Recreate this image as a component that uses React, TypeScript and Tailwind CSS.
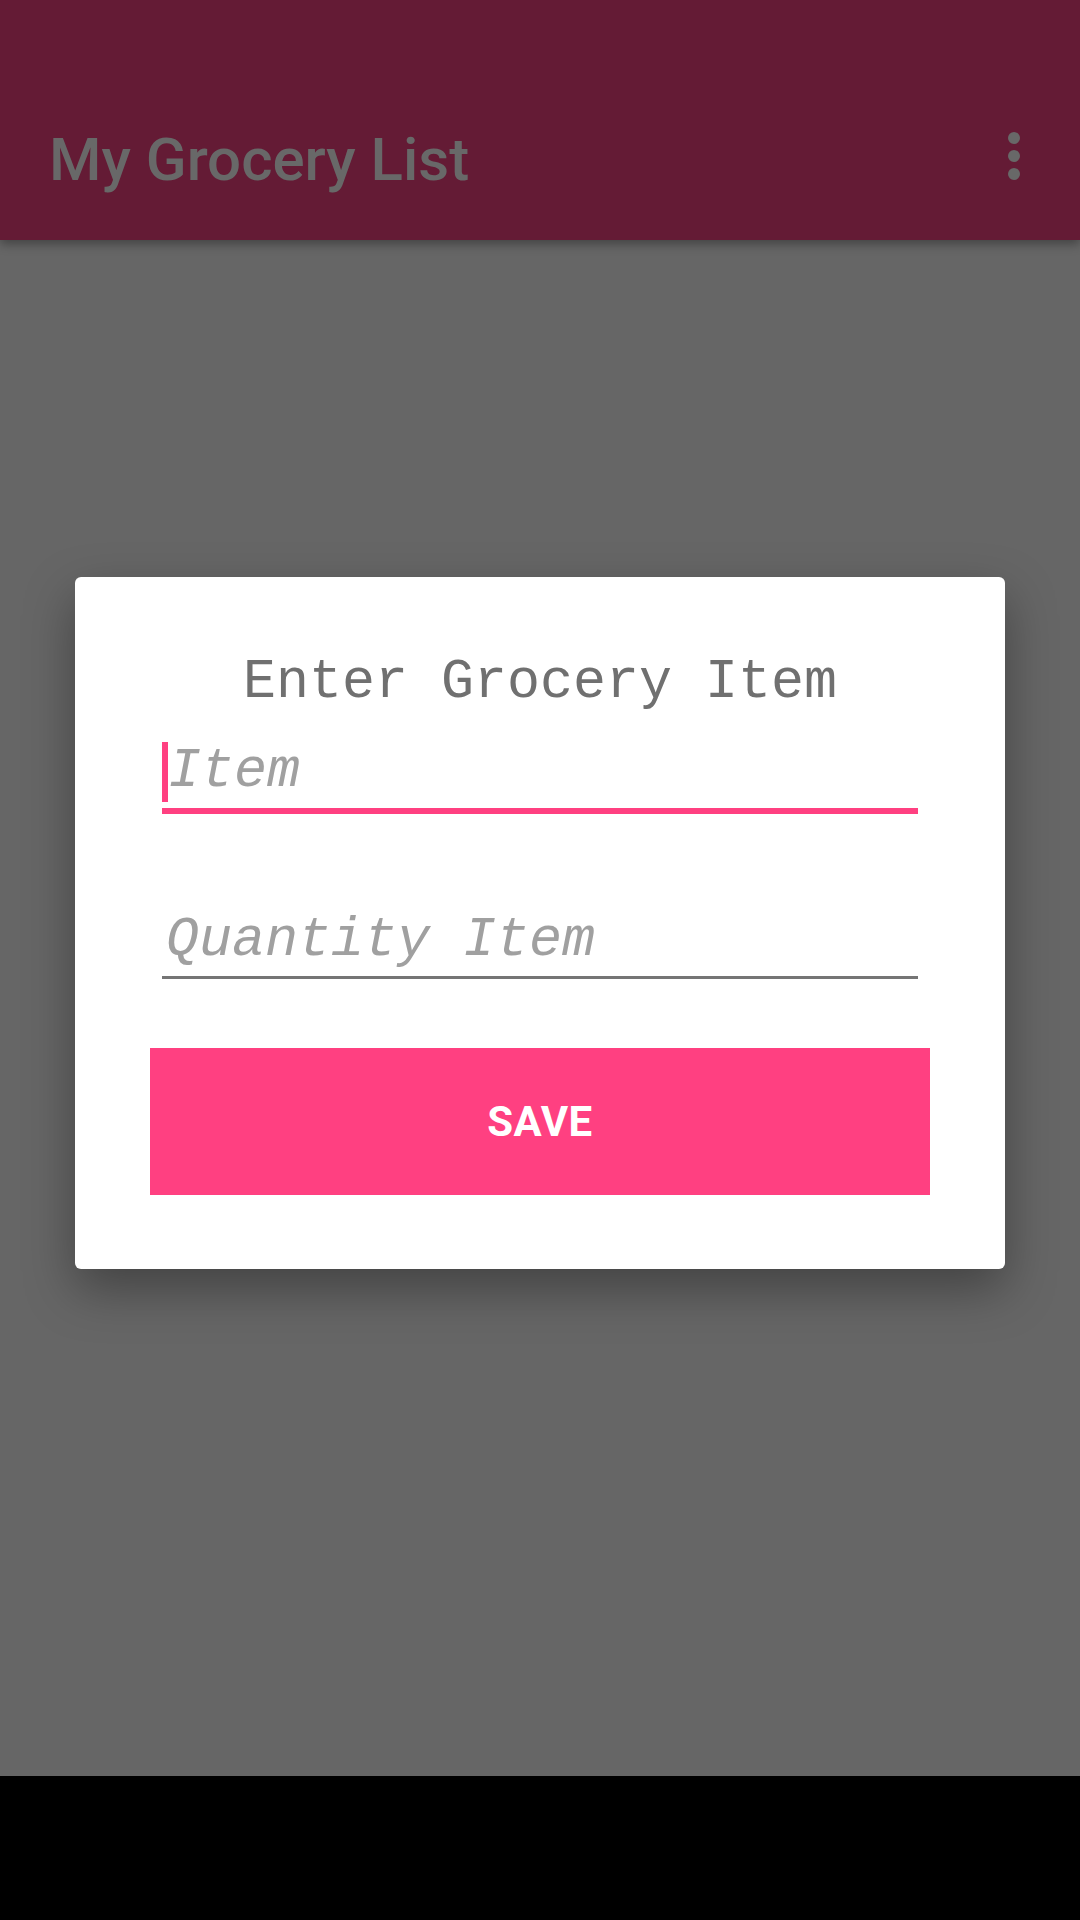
import { EllipsisVertical } from "lucide-react";

const mono = "font-['Courier_New','Liberation_Mono',monospace]";

function TopBar() {
  return (
    <header className="relative z-10 flex h-[240px] shrink-0 items-end bg-[#641B35] shadow-[0_4px_10px_rgba(0,0,0,0.35)]">
      <div className="flex h-[168px] w-full items-center justify-between pl-[49px] pr-[30px]">
        <h1 className="pt-[8px] font-['Roboto',sans-serif] text-[60px] font-medium leading-none text-[#686868]">
          My Grocery List
        </h1>
        {/* overflow menu */}
        <div className="flex h-[72px] w-[72px] flex-col items-center justify-center gap-[6px]">
          <span className="block h-[12px] w-[12px] rounded-full bg-[#686868]" />
          <span className="block h-[12px] w-[12px] rounded-full bg-[#686868]" />
          <span className="block h-[12px] w-[12px] rounded-full bg-[#686868]" />
        </div>
      </div>
    </header>
  );
}

function GroceryDialog() {
  return (
    <div className="mx-[75px] mt-[337px] flex h-[692px] flex-col rounded-[6px] bg-white px-[75px] pt-[78px] shadow-[0_20px_50px_rgba(0,0,0,0.35)]">
      <h2 className={`${mono} text-center text-[55px] font-normal leading-[55px] text-[#707070]`}>
        Enter Grocery Item
      </h2>

      {/* focused field */}
      <div className="mx-[12px] mt-[32px] flex h-[72px] items-start border-b-[6px] border-[#FF4081]">
        <span className="block h-[60px] w-[6px] bg-[#FF4081]" />
        <span className={`${mono} text-[55px] italic leading-[60px] text-[#a0a0a0]`}>Item</span>
      </div>

      <div className="mx-[12px] mt-[97px] flex h-[68px] items-start border-b-[3px] border-[#757575] pl-[4px]">
        <span className={`${mono} text-[55px] italic leading-[60px] text-[#a0a0a0]`}>
          Quantity Item
        </span>
      </div>

      <button className="mt-[69px] flex h-[147px] w-full items-center justify-center bg-[#FF4081] font-['Roboto',sans-serif] text-[42px] font-bold tracking-[0.5px] text-white">
        SAVE
      </button>
    </div>
  );
}

export default function App() {
  return (
    <div className="flex h-[1920px] w-[1080px] flex-col overflow-hidden bg-[#666666]">
      <TopBar />
      <main className="flex-1">
        <GroceryDialog />
      </main>
      <div className="h-[144px] shrink-0 bg-black" />
    </div>
  );
}
